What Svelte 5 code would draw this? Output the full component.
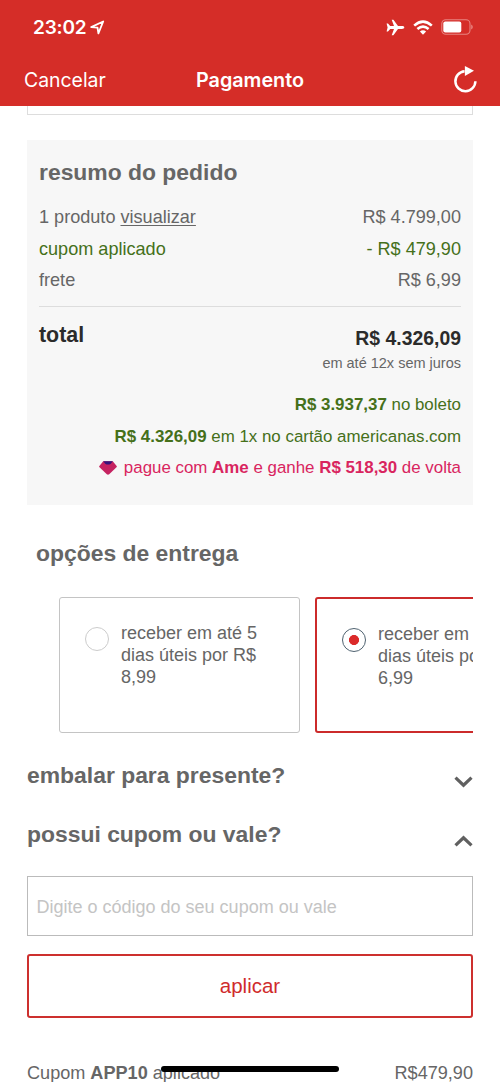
<script>
  const offers = [
    { value: 'R$ 3.937,37', text: ' no boleto' },
    { value: 'R$ 4.326,09', text: ' em 1x no cartão americanas.com' }
  ];
  const options = [
    { lines: ['receber em até 5', 'dias úteis por R$', '8,99'], selected: false },
    { lines: ['receber em até 8', 'dias úteis por R$', '6,99'], selected: true }
  ];
</script>

<div class="screen">
  <header>
    <div class="status">
      <div class="clock">
        <span>23:02</span>
        <svg width="15" height="15" viewBox="0 0 15 15"><path d="M1.2 7.1 13.2 1.5 8.4 13.3 7.5 7.6Z" fill="none" stroke="#fff" stroke-width="1.8" stroke-linejoin="round" /></svg>
      </div>
      <div class="signals">
        <svg class="plane" width="19" height="17" viewBox="0 0 19 17"><path d="M18.3 8.5C18.3 7.5 17 7.1 16 7.1H12L7.4.7H5.7L8 7.1H4.2L2 4.4H.6L1.6 8.5.6 12.6H2L4.2 9.9H8L5.7 16.3H7.4L12 9.9H16C17 9.9 18.3 9.5 18.3 8.5Z" fill="#fff" /></svg>
        <svg class="wifi" width="20" height="15" viewBox="0 0 20 15"><g fill="none" stroke="#fff" stroke-width="2.6"><path d="M1.2 5.6Q10-2.2 18.8 5.6" /><path d="M4.4 9Q10 4.1 15.6 9" /></g><path d="M6.9 11.6Q10 9 13.1 11.6L10 14.7Z" fill="#fff" /></svg>
        <svg width="32" height="16" viewBox="0 0 32 16"><rect x=".8" y=".8" width="28.2" height="14.4" rx="4" fill="none" stroke="#e88480" stroke-width="1.1" /><rect x="2.3" y="2.5" width="18" height="11" rx="2" fill="#fff" /><path d="M30.2 5.5Q31.8 6.1 31.8 8T30.2 10.5Z" fill="#e88480" /></svg>
      </div>
    </div>
    <nav>
      <span class="cancel">Cancelar</span>
      <h1>Pagamento</h1>
      <svg width="26" height="30" viewBox="0 0 26 30"><path d="M12.6 6.2A10 10 0 1 0 23.4 16.2" fill="none" stroke="#fff" stroke-width="2.5" /><path d="M12.9.9 22 5.8 12.9 11.1Z" fill="#fff" /></svg>
    </nav>
  </header>

  <main>
    <div class="previous"></div>

    <section class="summary">
      <h2>resumo do pedido</h2>
      <div class="row"><span>1 produto <u>visualizar</u></span><span>R$ 4.799,00</span></div>
      <div class="row green"><span>cupom aplicado</span><span>- R$ 479,90</span></div>
      <div class="row"><span>frete</span><span>R$ 6,99</span></div>
      <div class="total">
        <strong class="label">total</strong>
        <div class="amount">
          <strong>R$ 4.326,09</strong>
          <small>em até 12x sem juros</small>
        </div>
      </div>
      {#each offers as offer}
        <p class="offer green"><b>{offer.value}</b>{offer.text}</p>
      {/each}
      <p class="offer ame">
        <svg width="18" height="14" viewBox="0 0 18 14"><path d="M4.2.3H13.8L17.8 5.2Q18 5.8 17.5 6.3L10.2 13.2Q9 14.1 7.8 13.2L.5 6.3Q0 5.8.2 5.2Z" fill="#c52361" /><path d="M4.2.3H13.8L11.8 2.7Q9 4.4 6.2 2.7Z" fill="#35147b" /></svg>
        <span>pague com <b>Ame</b> e ganhe <b>R$ 518,30</b> de volta</span>
      </p>
    </section>

    <h2 class="delivery-title">opções de entrega</h2>
    <div class="options">
      {#each options as option}
        <div class="option" class:selected={option.selected}>
          <i class="radio"></i>
          <div class="text">
            {#each option.lines as line}<div>{line}</div>{/each}
          </div>
        </div>
      {/each}
    </div>

    <div class="accordion gift">
      <h2>embalar para presente?</h2>
      <svg width="19" height="12" viewBox="0 0 19 12"><path d="M1.5 1.7 9.5 9.2 17.5 1.7" /></svg>
    </div>
    <div class="accordion coupon">
      <h2>possui cupom ou vale?</h2>
      <svg width="19" height="12" viewBox="0 0 19 12"><path d="M1.5 10.3 9.5 2.8 17.5 10.3" /></svg>
    </div>

    <input type="text" placeholder="Digite o código do seu cupom ou vale" />
    <button>aplicar</button>
    <div class="applied"><span>Cupom <b>APP10</b> aplicado</span><span>R$479,90</span></div>
  </main>
  <div class="home"></div>
</div>

<style>
  :global(body) { margin: 0; background: #fff; }
  .screen {
    position: relative;
    width: 500px;
    height: 1082px;
    overflow: hidden;
    background: #fff;
    color: #666;
    font: 18px "Liberation Sans", Arial, sans-serif;
  }
  .screen * { box-sizing: border-box; }
  svg { display: block; flex: none; }
  h1, h2, p { margin: 0; }
  header {
    height: 106px;
    background: #d52d28;
    color: #fff;
    font-family: Inter, sans-serif;
  }
  .status {
    height: 54px;
    padding: 0 27px 0 33px;
    display: flex;
    justify-content: space-between;
    align-items: center;
  }
  .clock { display: flex; align-items: center; gap: 4px; font-size: 19px; font-weight: 600; letter-spacing: -.2px; }
  .signals { display: flex; align-items: center; }
  .plane { margin-right: 8px; }
  .wifi { margin-right: 8px; }
  nav {
    height: 52px;
    padding: 0 22px 0 24px;
    display: grid;
    grid-template-columns: 1fr auto 1fr;
    align-items: center;
  }
  nav svg { justify-self: end; }
  .cancel { font-size: 19.4px; }
  h1 { font-size: 19.8px; font-weight: 600; margin-left: -2px; }
  main { padding: 0 27px; }
  .previous { height: 9px; border: 1.5px solid #ddd; border-top: 0; }
  .summary {
    height: 365px;
    margin-top: 25px;
    padding: 16px 12px 0;
    background: #f7f7f7;
  }
  h2 { font-size: 22.9px; line-height: 32px; font-weight: 700; }
  .summary h2 { margin-bottom: 14px; }
  .row { display: flex; justify-content: space-between; line-height: 31.5px; font-size: 18.1px; }
  .green { color: #45701a; }
  u { text-underline-offset: 2px; text-decoration-thickness: 1px; }
  .total {
    height: 83px;
    margin-top: 9.5px;
    border-top: 1px solid #ddd;
    display: flex;
    justify-content: space-between;
    color: #2b2b2b;
  }
  .label { font-size: 21.4px; line-height: 28px; margin-top: 14px; }
  .amount { display: flex; flex-direction: column; align-items: flex-end; padding-top: 19px; }
  .amount strong { font-size: 19.4px; line-height: 25px; }
  .amount small { font-size: 14.5px; line-height: 24px; color: #666; }
  .offer { font-size: 16.9px; line-height: 31.5px; text-align: right; white-space: nowrap; }
  .ame { display: flex; justify-content: flex-end; align-items: center; gap: 7px; color: #d9255f; }
  .delivery-title { margin: 32px 0 0 9px; }
  .options {
    margin: 28px 0 0 32px;
    display: flex;
    gap: 15px;
    overflow: hidden;
  }
  .option {
    flex: none;
    width: 241px;
    height: 136px;
    border: 1px solid #c4c4c4;
    border-radius: 3px;
    padding: 25px 0 0 25px;
    display: flex;
    gap: 12px;
  }
  .option.selected { border: 2px solid #cc2b2b; }
  .radio {
    width: 24px;
    height: 24px;
    margin-top: 4px;
    border: 1px solid #ccc;
    border-radius: 50%;
    flex: none;
  }
  .selected .radio { border-color: #4f6270; background: radial-gradient(circle, #db2a2a 4.7px, transparent 5.3px); }
  .text { line-height: 21.8px; white-space: nowrap; }
  .accordion { display: flex; justify-content: space-between; align-items: flex-start; }
  .gift { margin-top: 26px; }
  .coupon { margin-top: 27px; }
  .accordion svg { margin-top: 17px; }
  .accordion path { fill: none; stroke: #606060; stroke-width: 3.2; }
  input {
    display: block;
    width: 446px;
    height: 60px;
    margin-top: 26px;
    padding: 3px 8.5px 0;
    border: 1px solid #bbb;
    border-radius: 0;
    outline: 0;
    font: 18px "Liberation Sans", Arial, sans-serif;
  }
  input::placeholder { color: #c4c4c4; opacity: 1; }
  button {
    display: block;
    width: 446px;
    height: 64px;
    margin-top: 18px;
    padding: 0;
    border: 2px solid #cd302e;
    border-radius: 3px;
    background: #fff;
    color: #d02b2b;
    font: 20.5px "Liberation Sans", Arial, sans-serif;
  }
  .applied { display: flex; justify-content: space-between; margin-top: 43px; line-height: 24px; font-size: 18.1px; }
  .home {
    position: absolute;
    left: 161px;
    top: 1066px;
    width: 178px;
    height: 6px;
    border-radius: 3px;
    background: #000;
  }
</style>
